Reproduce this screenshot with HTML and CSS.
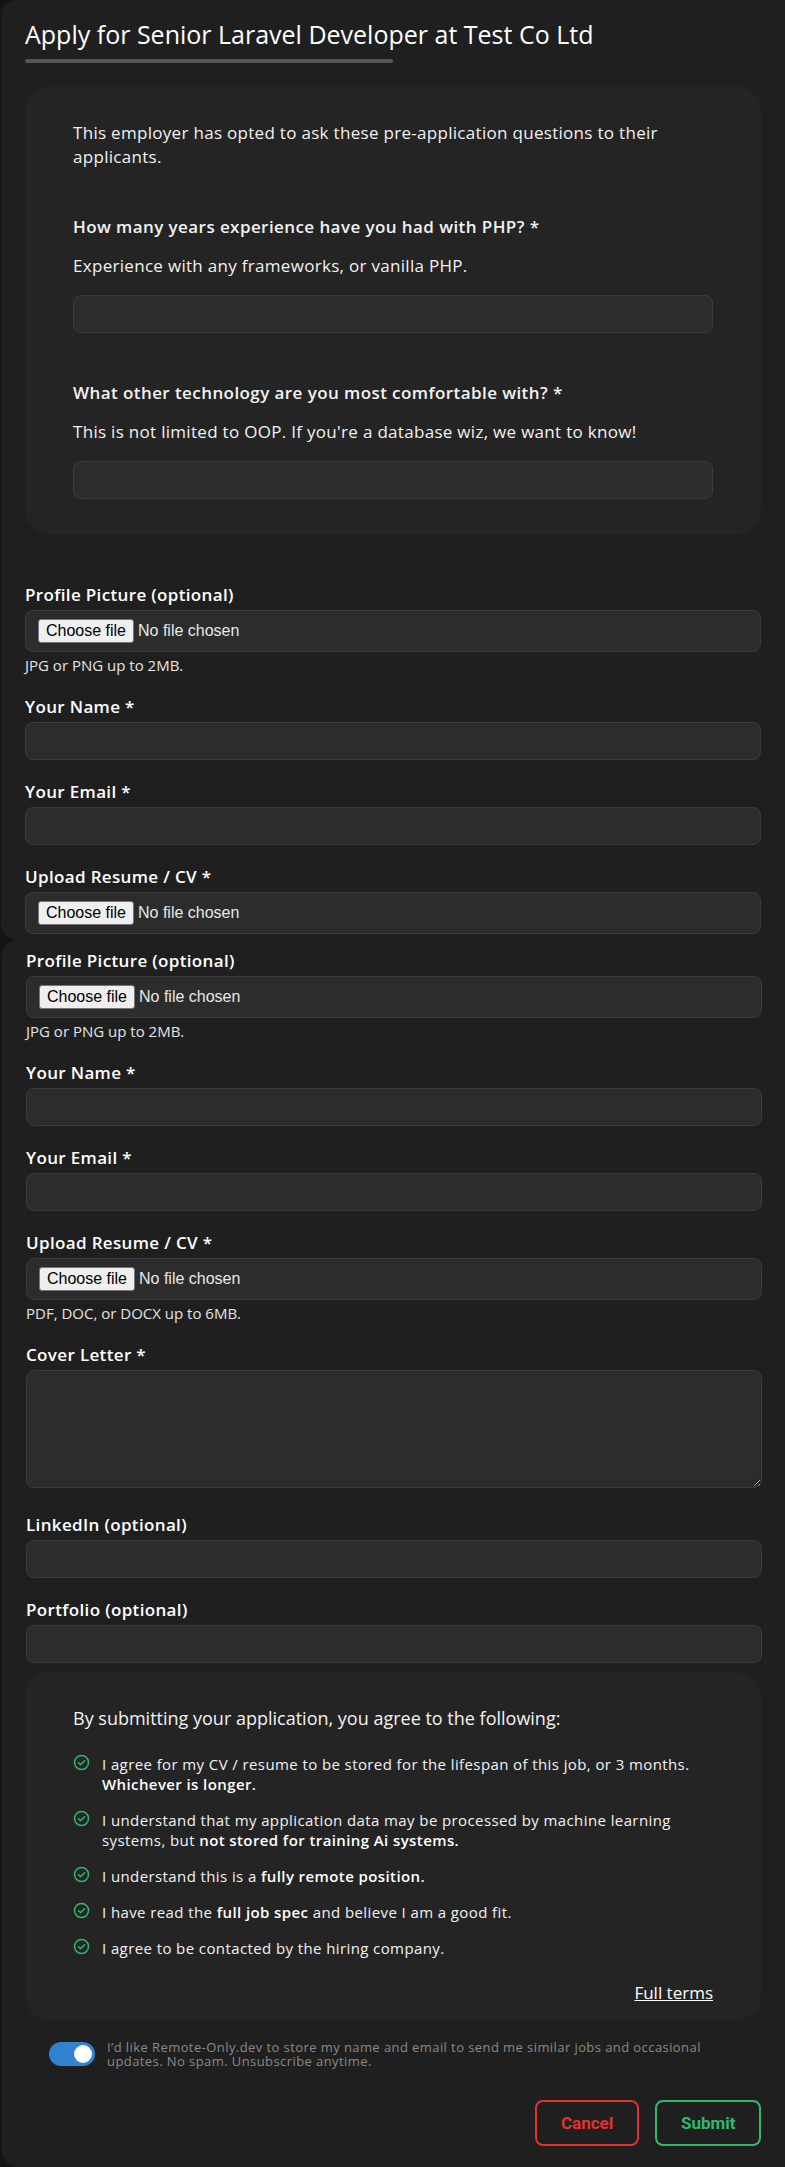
FILE: index.html
```html
<!DOCTYPE html>
<html>
<head>
  <title>Apply for Senior Laravel Developer at Test Co Ltd</title>
  <link rel="stylesheet" href="styles.css">
</head>
<body>

<div class="panel panel-top">
  <h1>Apply for Senior Laravel Developer at Test Co Ltd</h1>
  <div class="title-rule"></div>

  <div class="card questions">
    <p class="intro">This employer has opted to ask these pre-application questions to their applicants.</p>

    <div class="question">
      <label class="question-label" for="q1">How many years experience have you had with PHP? *</label>
      <p class="question-desc">Experience with any frameworks, or vanilla PHP.</p>
      <input type="text" id="q1">
    </div>
    <div class="question">
      <label class="question-label" for="q2">What other technology are you most comfortable with? *</label>
      <p class="question-desc">This is not limited to OOP. If you're a database wiz, we want to know!</p>
      <input type="text" id="q2">
    </div>
  </div>

  <div class="form-group first-group">
    <label>Profile Picture (optional)</label>
    <div class="file-input"><button type="button">Choose file</button><span>No file chosen</span></div>
    <p class="hint">JPG or PNG up to 2MB.</p>
  </div>
  <div class="form-group">
    <label for="name1">Your Name *</label>
    <input type="text" id="name1">
  </div>
  <div class="form-group">
    <label for="email1">Your Email *</label>
    <input type="email" id="email1">
  </div>
  <div class="form-group">
    <label>Upload Resume / CV *</label>
    <div class="file-input"><button type="button">Choose file</button><span>No file chosen</span></div>
  </div>
</div>

<div class="panel panel-bottom">
  <div class="form-group">
    <label>Profile Picture (optional)</label>
    <div class="file-input"><button type="button">Choose file</button><span>No file chosen</span></div>
    <p class="hint">JPG or PNG up to 2MB.</p>
  </div>
  <div class="form-group">
    <label for="name2">Your Name *</label>
    <input type="text" id="name2">
  </div>
  <div class="form-group">
    <label for="email2">Your Email *</label>
    <input type="email" id="email2">
  </div>
  <div class="form-group">
    <label>Upload Resume / CV *</label>
    <div class="file-input"><button type="button">Choose file</button><span>No file chosen</span></div>
    <p class="hint">PDF, DOC, or DOCX up to 6MB.</p>
  </div>
  <div class="form-group">
    <label for="cover">Cover Letter *</label>
    <textarea id="cover"></textarea>
  </div>
  <div class="form-group group-after-textarea">
    <label for="linkedin">LinkedIn (optional)</label>
    <input type="text" id="linkedin">
  </div>
  <div class="form-group last-group">
    <label for="portfolio">Portfolio (optional)</label>
    <input type="text" id="portfolio">
  </div>

  <div class="card terms">
    <p class="terms-title">By submitting your application, you agree to the following:</p>
    <ul class="terms-list">
      <li>
        <svg class="check" viewBox="0 0 17 17"><circle cx="8.5" cy="8.5" r="7"/><path d="M5.5 8.7l2.1 2.1 3.9-4.1"/></svg>
        <span>I agree for my CV / resume to be stored for the lifespan of this job, or 3 months. <strong>Whichever is longer.</strong></span>
      </li>
      <li>
        <svg class="check" viewBox="0 0 17 17"><circle cx="8.5" cy="8.5" r="7"/><path d="M5.5 8.7l2.1 2.1 3.9-4.1"/></svg>
        <span>I understand that my application data may be processed by machine learning systems, but <strong>not stored for training Ai systems.</strong></span>
      </li>
      <li>
        <svg class="check" viewBox="0 0 17 17"><circle cx="8.5" cy="8.5" r="7"/><path d="M5.5 8.7l2.1 2.1 3.9-4.1"/></svg>
        <span>I understand this is a <strong>fully remote position.</strong></span>
      </li>
      <li>
        <svg class="check" viewBox="0 0 17 17"><circle cx="8.5" cy="8.5" r="7"/><path d="M5.5 8.7l2.1 2.1 3.9-4.1"/></svg>
        <span>I have read the <strong>full job spec</strong> and believe I am a good fit.</span>
      </li>
      <li>
        <svg class="check" viewBox="0 0 17 17"><circle cx="8.5" cy="8.5" r="7"/><path d="M5.5 8.7l2.1 2.1 3.9-4.1"/></svg>
        <span>I agree to be contacted by the hiring company.</span>
      </li>
    </ul>
    <div class="terms-link"><a href="#">Full terms</a></div>
  </div>

  <div class="consent">
    <span class="toggle"><span class="knob"></span></span>
    <p>I’d like Remote-Only.dev to store my name and email to send me similar jobs and occasional updates. No spam. Unsubscribe anytime.</p>
  </div>

  <div class="actions">
    <button class="btn-cancel">Cancel</button>
    <button class="btn-submit">Submit</button>
  </div>
</div>

</body>
</html>
```

FILE: styles.css
```css
body {
  font-family: 'Open Sans', sans-serif;
  background-color: #141414;
  color: #f2f2f2;
  margin: 0;
  padding: 0;
}

p {
  margin: 0;
}

.panel {
  background-color: #1f1f1f;
  box-sizing: border-box;
}

.panel-top {
  height: 940px;
  margin-left: 1px;
  padding: 18px 24px 0 24px;
  border-radius: 16px 0 0 16px;
}

.panel-bottom {
  height: 1227px;
  margin-left: 2px;
  padding: 11px 23px 0 24px;
  border-radius: 16px 0 0 16px;
}

h1 {
  margin: 0;
  font-size: 25px;
  line-height: 32px;
  font-weight: 500;
  color: #fff;
}

.title-rule {
  width: 50%;
  height: 4px;
  margin-top: 9px;
  background-color: #555;
  border-radius: 2px;
}

.card {
  background-color: #242424;
  border-radius: 24px;
}

.questions {
  margin-top: 24px;
  height: 447px;
  box-sizing: border-box;
  padding: 34px 48px;
}

.intro {
  font-size: 17px;
  line-height: 24px;
  letter-spacing: 0.3px;
}

.question {
  margin-top: 46px;
}

.question + .question {
  margin-top: 48px;
}

.question-label {
  display: block;
  font-size: 17px;
  line-height: 24px;
  font-weight: 600;
  letter-spacing: 0.42px;
}

.question-desc {
  margin: 15px 0 17px;
  font-size: 17px;
  line-height: 24px;
  letter-spacing: 0.3px;
}

.first-group {
  margin-top: 51px;
}

.form-group {
  margin-bottom: 22px;
}

.last-group {
  margin-bottom: 9px;
}

.form-group label {
  display: block;
  margin-bottom: 5px;
  font-size: 17px;
  line-height: 20px;
  font-weight: 600;
  letter-spacing: 0.35px;
  color: #fff;
}

input[type="text"], input[type="email"], textarea {
  display: block;
  width: 100%;
  height: 38px;
  background-color: #2c2c2c;
  border: 1px solid #3b3b3b;
  border-radius: 8px;
  box-sizing: border-box;
  color: #fff;
}

textarea {
  height: 118px;
  resize: vertical;
}

.group-after-textarea {
  margin-top: 27px;
}

.file-input {
  display: flex;
  align-items: center;
  gap: 4px;
  height: 42px;
  padding: 0 12px;
  background-color: #2c2c2c;
  border: 1px solid #3b3b3b;
  border-radius: 8px;
  box-sizing: border-box;
  font-family: 'Liberation Sans', sans-serif;
  font-size: 16px;
  color: #e8e8e8;
}

.file-input button {
  width: 96px;
  height: 24px;
  padding: 0;
  background-color: #efefef;
  border: 1px solid #767676;
  border-radius: 3px;
  font-family: 'Liberation Sans', sans-serif;
  font-size: 16px;
  font-weight: 400;
  color: #000;
}

.hint {
  margin-top: 3px;
  font-size: 15px;
  line-height: 20px;
  color: #e4e4e4;
}

.terms {
  width: 736px;
  margin-left: -1px;
  height: 348px;
  box-sizing: border-box;
  padding: 34px 48px 0;
}

.terms-title {
  font-size: 18px;
  line-height: 24px;
}

.terms-list {
  list-style: none;
  margin: 24px 0 0;
  padding: 0;
}

.terms-list li {
  display: flex;
  gap: 12px;
  margin-bottom: 16px;
  font-size: 15px;
  line-height: 20px;
  letter-spacing: 0.4px;
}

.terms-list strong {
  font-weight: 600;
  color: #fff;
}

.check {
  flex: none;
  width: 17px;
  height: 17px;
  fill: none;
  stroke: #2fb96c;
  stroke-width: 1.5;
  stroke-linecap: round;
  stroke-linejoin: round;
}

.terms-link {
  margin-top: 23px;
  text-align: right;
  font-size: 17px;
  line-height: 24px;
}

.terms-link a {
  color: #fff;
}

.consent {
  display: flex;
  align-items: center;
  gap: 12px;
  margin: 20px 0 0 23px;
  font-size: 13px;
  line-height: 14px;
  letter-spacing: 0.42px;
  color: #8a8a8a;
}

.consent p {
  width: 620px;
}

.toggle {
  flex: none;
  display: flex;
  justify-content: flex-end;
  align-items: center;
  width: 46px;
  height: 24px;
  padding: 3px;
  box-sizing: border-box;
  background-color: #3182ce;
  border-radius: 12px;
}

.knob {
  width: 18px;
  height: 18px;
  background-color: #fff;
  border-radius: 50%;
}

.actions {
  display: flex;
  justify-content: flex-end;
  gap: 16px;
  margin: 32px 1px 0 0;
}

.actions button {
  height: 46px;
  padding: 0 24px;
  background: none;
  border: 2px solid;
  border-radius: 8px;
  font-family: 'Roboto', sans-serif;
  font-size: 17px;
  font-weight: 700;
  cursor: pointer;
}

.btn-cancel {
  width: 104px;
  color: #e53030;
  border-color: #e53030;
}

.btn-submit {
  width: 106px;
  color: #2fb96c;
  border-color: #2fb96c;
}
```
